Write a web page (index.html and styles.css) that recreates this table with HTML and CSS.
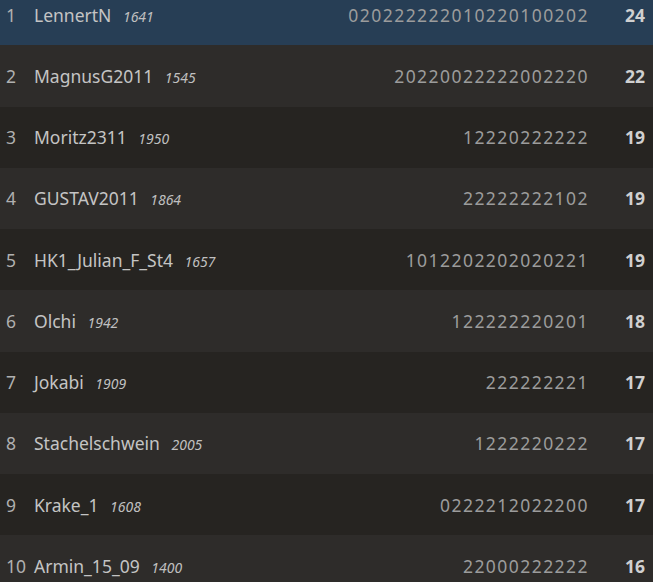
FILE: index.html
```html
<!DOCTYPE html>
<html lang="en">
<head>
  <meta charset="UTF-8" />
  <title>Standings</title>
  <link rel="stylesheet" href="styles.css">
</head>
<body>
  <div class="standings">
    <div class="row me">
      <span class="rank">1</span>
      <span class="player">LennertN <em>1641</em></span>
      <span class="sheet">020222222010220100202</span>
      <span class="total">24</span>
    </div>
    <div class="row">
      <span class="rank">2</span>
      <span class="player">MagnusG2011 <em>1545</em></span>
      <span class="sheet">20220022222002220</span>
      <span class="total">22</span>
    </div>
    <div class="row">
      <span class="rank">3</span>
      <span class="player">Moritz2311 <em>1950</em></span>
      <span class="sheet">12220222222</span>
      <span class="total">19</span>
    </div>
    <div class="row">
      <span class="rank">4</span>
      <span class="player">GUSTAV2011 <em>1864</em></span>
      <span class="sheet">22222222102</span>
      <span class="total">19</span>
    </div>
    <div class="row">
      <span class="rank">5</span>
      <span class="player">HK1_Julian_F_St4 <em>1657</em></span>
      <span class="sheet">1012202202020221</span>
      <span class="total">19</span>
    </div>
    <div class="row">
      <span class="rank">6</span>
      <span class="player">Olchi <em>1942</em></span>
      <span class="sheet">122222220201</span>
      <span class="total">18</span>
    </div>
    <div class="row">
      <span class="rank">7</span>
      <span class="player">Jokabi <em>1909</em></span>
      <span class="sheet">222222221</span>
      <span class="total">17</span>
    </div>
    <div class="row">
      <span class="rank">8</span>
      <span class="player">Stachelschwein <em>2005</em></span>
      <span class="sheet">1222220222</span>
      <span class="total">17</span>
    </div>
    <div class="row">
      <span class="rank">9</span>
      <span class="player">Krake_1 <em>1608</em></span>
      <span class="sheet">0222212022200</span>
      <span class="total">17</span>
    </div>
    <div class="row">
      <span class="rank">10</span>
      <span class="player">Armin_15_09 <em>1400</em></span>
      <span class="sheet">22000222222</span>
      <span class="total">16</span>
    </div>
  </div>
</body>
</html>
```

FILE: styles.css
```css
body {
  margin: 0;
  background: #262421;
  font-family: 'Noto Sans', sans-serif;
  color: #bababa;
  overflow: hidden;
}

.standings {
  margin-top: -16px;
}

.row {
  display: flex;
  align-items: center;
  height: 61.25px;
  background: #262421;
}

.row:nth-child(even) {
  background: #2e2c2a;
}

.row.me {
  background: #273e55;
}

.rank {
  width: 34px;
  padding-left: 6px;
  box-sizing: border-box;
  font-size: 17.5px;
  color: #b0b0b0;
}

.player {
  font-size: 17.5px;
  color: #c4c4c4;
  white-space: nowrap;
}

.player em {
  font-size: 14px;
  color: #c0c0c0;
  margin-left: 7px;
}

.sheet {
  flex: 1;
  text-align: right;
  font-size: 17.5px;
  letter-spacing: 1.45px;
  color: #9c9c9c;
  padding-right: 26px;
  white-space: nowrap;
}

.total {
  width: 30px;
  padding-right: 8px;
  text-align: right;
  font-size: 17.5px;
  font-weight: bold;
  color: #d0d0d0;
}
```
